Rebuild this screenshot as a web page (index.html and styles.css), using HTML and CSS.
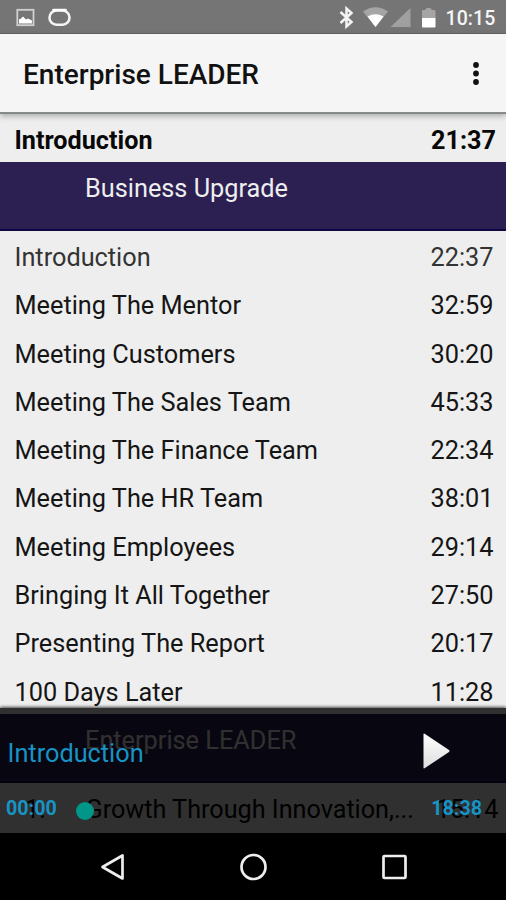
FILE: index.html
```html
<!DOCTYPE html>
<html lang="en">
<head>
<meta charset="utf-8">
<title>Enterprise LEADER</title>
<link rel="stylesheet" href="styles.css">
</head>
<body>
<div class="phone">
  <header class="status">
    <svg class="status-left" width="80" height="34" viewBox="0 0 80 34">
      <rect x="17.3" y="9.8" width="16.2" height="15.4" fill="none" stroke="#d0d0d0" stroke-width="1.8"/>
      <path d="M19 23.500v-4l2-1 2-2 3 3 2-1 4 2v3z" fill="#fff"/>
      <rect x="49.500" y="10.500" width="20" height="14.200" rx="7" fill="none" stroke="#f4f4f4" stroke-width="2.600"/>
      <path d="M53.500 10h12" stroke="#fff" stroke-width="2.600" stroke-linecap="round"/>
    </svg>
    <div class="status-right">
      <svg width="100" height="34" viewBox="338 0 100 34">
        <path d="M340.500 12l11 10-5 4.500V8.500l5 4.500-11 10" fill="none" stroke="#f4f4f4" stroke-width="2.500"/>
        <path d="M363 11.500Q375.500 3 388 11.500L375.500 27z" fill="#a5a5a5"/>
        <path d="M367.500 16.500Q375.500 12 383.500 16.500L375.500 27z" fill="#fff"/>
        <path d="M390.500 27L410.500 8v19z" fill="#a0a0a0"/>
        <path d="M422 11q0-1 1-1h2q1-2 2-2h3q1 0 2 2h2q1.500 0 1.500 1v7H422z" fill="#a5a5a5"/>
        <path d="M422 18h13.500v8.500q0 1-1 1H423q-1 0-1-1z" fill="#fff"/>
      </svg>
      <span class="clock">10:15</span>
    </div>
  </header>
  <div class="appbar">
    <h1>Enterprise LEADER</h1>
    <svg width="8" height="26" viewBox="0 0 8 26"><g fill="#111"><circle cx="4" cy="5" r="2.900"/><circle cx="4" cy="13.500" r="2.900"/><circle cx="4" cy="22" r="2.900"/></g></svg>
  </div>
  <main class="content">
    <div class="list">
      <div class="row current"><span>Introduction</span><span class="time">21:37</span></div>
      <div class="section">Business Upgrade</div>
      <div class="row first"><span>Introduction</span><span class="time">22:37</span></div>
      <div class="row"><span>Meeting The Mentor</span><span class="time">32:59</span></div>
      <div class="row"><span>Meeting Customers</span><span class="time">30:20</span></div>
      <div class="row"><span>Meeting The Sales Team</span><span class="time">45:33</span></div>
      <div class="row"><span>Meeting The Finance Team</span><span class="time">22:34</span></div>
      <div class="row"><span>Meeting The HR Team</span><span class="time">38:01</span></div>
      <div class="row"><span>Meeting Employees</span><span class="time">29:14</span></div>
      <div class="row"><span>Bringing It All Together</span><span class="time">27:50</span></div>
      <div class="row"><span>Presenting The Report</span><span class="time">20:17</span></div>
      <div class="row"><span>100 Days Later</span><span class="time">11:28</span></div>
      <div class="section">Enterprise LEADER</div>
      <div class="row numbered"><span class="num">1.</span><span class="name">Growth Through Innovation,...</span><span class="time">15:14</span></div>
    </div>
    <div class="player">
      <div class="now">
        <span>Introduction</span>
        <svg width="32" height="40" viewBox="0 0 32 40"><defs><linearGradient id="g" x1="0" y1="0" x2="0" y2="1"><stop offset="0" stop-color="#fff"/><stop offset="1" stop-color="#ddd"/></linearGradient></defs><path d="M2.500 3.500q0-1.500 1.500-.5L28 19q1 1 0 2L4 37q-1.500 1-1.500-.5z" fill="url(#g)"/></svg>
      </div>
      <div class="seek">
        <span class="elapsed">00:00</span>
        <span class="track"><i class="thumb"></i></span>
        <span class="total">18:38</span>
      </div>
    </div>
  </main>
  <nav class="nav">
    <svg width="30" height="30" viewBox="0 0 30 30"><path d="M5.500 15L25.500 3.500v23z"/></svg>
    <svg width="30" height="30" viewBox="0 0 30 30"><circle cx="15.500" cy="15" r="12"/></svg>
    <svg width="30" height="30" viewBox="0 0 30 30"><rect x="4.500" y="4" width="22" height="22" rx="1"/></svg>
  </nav>
</div>
</body>
</html>
```
FILE: styles.css
```css
* { box-sizing: border-box; }
body { margin: 0; background: #000; font-family: Roboto, sans-serif; }
.phone { width: 506px; height: 900px; display: flex; flex-direction: column; overflow: hidden; }
.status { height: 34px; flex: none; background: #757575; border-bottom: 1px solid #666; display: flex; justify-content: space-between; }
.status svg { flex: none; }
.status-right { display: flex; width: 168px; }
.clock { font-size: 19.5px; font-weight: 500; line-height: 37px; color: #f5f5f5; margin-left: 7.5px; letter-spacing: .1px; }
.appbar { height: 80px; flex: none; background: #f5f5f5; border-bottom: 2px solid #858a88; padding: 0 26px 0 23px; display: flex; justify-content: space-between; align-items: center; position: relative; box-shadow: 0 2px 6px rgba(0,0,0,.3); z-index: 1; }
.appbar h1 { margin: 3px 0 0; font-size: 28px; font-weight: 500; line-height: 32px; color: #111; }
.content { height: 719px; flex: none; position: relative; overflow: hidden; background: #eee; }
.row { height: 48.3px; display: flex; justify-content: space-between; padding: 5px 12.5px 0 14.5px; font-size: 25.3px; line-height: 44px; color: #151515; white-space: nowrap; }
.row.first { color: #333; }
.row.current { height: 48px; font-weight: 700; font-size: 25.2px; color: #080808; padding-right: 10px; }
.section { height: 69px; background: #2b2051; border-bottom: 2px solid #100641; color: #eee; padding: 11px 0 0 85px; font-size: 25.3px; line-height: 32px; }
.row.numbered { height: 52px; padding-left: 25px; padding-right: 7.5px; font-size: 25.2px; color: #000; }
.numbered .num { width: 60.5px; }
.numbered .name { flex: 1; }
.player { position: absolute; left: 0; right: 0; bottom: 0; height: 125px; background: rgba(0,0,0,.8); box-shadow: 0 -1px 3px rgba(0,0,0,.7); }
.now { height: 75px; padding: 13px 53px 0 7.5px; display: flex; justify-content: space-between; font-size: 25.3px; line-height: 65px; color: #1793c5; }
.now svg { margin-top: 10px; }
.seek { height: 50px; display: flex; padding: 0 24px 0 6px; font-size: 19.7px; font-weight: 700; line-height: 52px; color: #1793c5; }
.elapsed { width: 79px; }
.track { flex: 1; height: 55px; display: flex; align-items: center; }
.thumb { width: 18px; height: 18px; border-radius: 50%; background: #009688; margin-left: -9px; }
.nav { flex: 1; background: #000; display: flex; gap: 111px; justify-content: center; align-items: center; }
.nav svg { fill: none; stroke: #eee; stroke-width: 2.7; stroke-linejoin: round; }
```
